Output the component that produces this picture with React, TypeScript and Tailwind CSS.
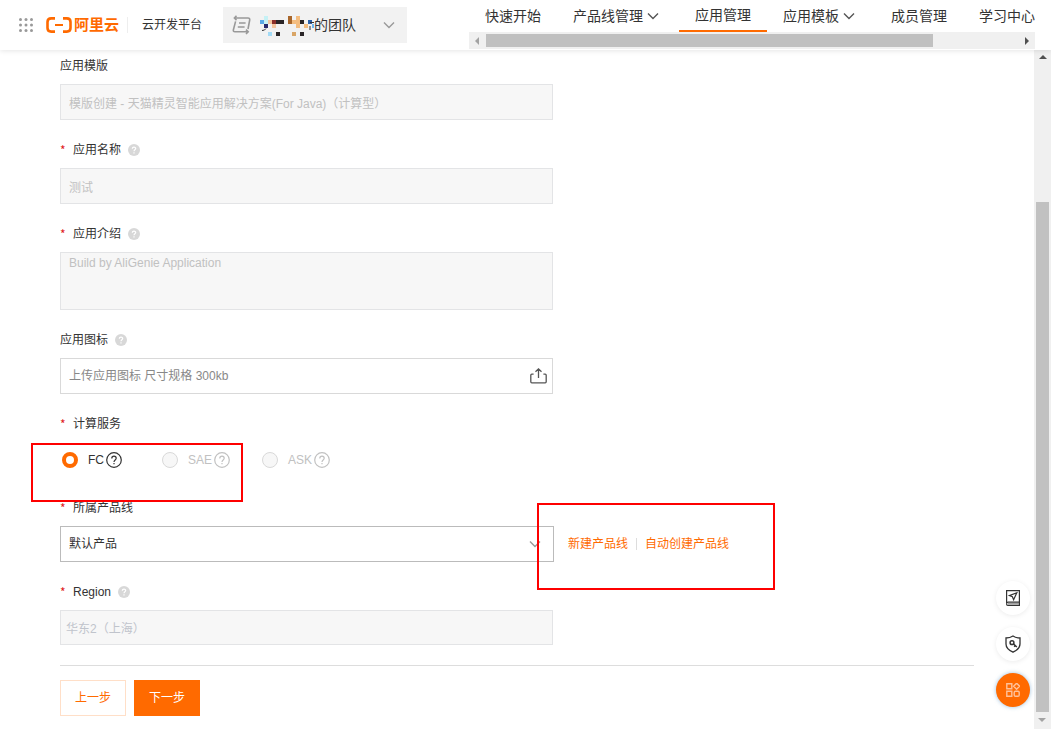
import React from 'react'
import { cva } from 'class-variance-authority'
import clsx from 'clsx'

interface NavItem {
  title: string
  active?: boolean
  hasMenu?: boolean
}

const navItems: NavItem[] = [
  { title: '快速开始' },
  { title: '产品线管理', hasMenu: true },
  { title: '应用管理', active: true },
  { title: '应用模板', hasMenu: true },
  { title: '成员管理' },
  { title: '学习中心' },
]

const services = [
  { name: 'FC', disabled: false },
  { name: 'SAE', disabled: true },
  { name: 'ASK', disabled: true },
]

// x, y, color
const mosaic: [number, number, string][] = [
  [4, 0, '#c5f1f5'],
  [28, 0, '#a9672c'],
  [36, 0, '#f4bd80'],
  [0, 4, '#5aa9e6'],
  [4, 4, '#c5f1f5'],
  [8, 4, '#f4c6a0'],
  [12, 4, '#8c2f2a'],
  [16, 4, '#2a2527'],
  [20, 4, '#2a2527'],
  [28, 4, '#a9672c'],
  [32, 4, '#f4bd80'],
  [36, 4, '#f4bd80'],
  [40, 4, '#2a2527'],
  [48, 4, '#2b62ad'],
  [4, 8, '#27296b'],
  [12, 8, '#f4c6a0'],
  [36, 8, '#f4bd80'],
  [44, 8, '#f4bd80'],
  [52, 8, '#6fb8f2'],
  [8, 16, '#a3dbf6'],
  [16, 16, '#2a2527'],
  [32, 16, '#d9a566'],
  [40, 16, '#2a2527'],
]

const field = cva('block w-[493px] max-w-full rounded-none border px-2 text-xs outline-none', {
  variants: {
    disabled: {
      true: 'border-[#e3e4e6] bg-[#f7f7f7] text-[#c1c1c1]',
      false: 'border-[#d9d9d9] bg-white text-[#333] placeholder:text-[#888]',
    },
  },
})

const Chevron: React.FC<{ className?: string }> = ({ className }) => (
  <svg className={className} width="12" height="12" viewBox="0 0 12 12" fill="none" stroke="currentColor" strokeWidth="1.4">
    <path d="M1 3.5 6 8.5 11 3.5" />
  </svg>
)

const HelpDot = () => (
  <svg className="ml-[7px]" width="12" height="12" viewBox="0 0 12 12" fill="none">
    <circle cx="6" cy="6" r="6" fill="#d8d8d8" />
    <path d="M4.3 4.7c0-2.2 3.4-2.2 3.4-.1C7.7 5.8 6 5.8 6 7.2M6 8.2v1.2" stroke="#fff" strokeWidth="1.2" />
  </svg>
)

const HelpRing = () => (
  <svg className="ml-0.5" width="16" height="16" viewBox="0 0 16 16" fill="none" stroke="currentColor" strokeWidth="1.2">
    <circle cx="8" cy="8" r="7.3" />
    <path d="M5.8 6.4c0-3 4.4-2.9 4.4-.1C10.2 7.9 8 8 8 9.9M8 11v1.3" />
  </svg>
)

interface LabelProps {
  htmlFor?: string
  id?: string
  required?: boolean
  help?: boolean
  children: React.ReactNode
}

const Label: React.FC<LabelProps> = ({ htmlFor, id, required, help, children }) => {
  const Tag = htmlFor ? 'label' : 'div'
  return (
    <Tag htmlFor={htmlFor} id={id} className="mb-[9px] flex h-[18px] items-center text-xs leading-[18px]">
      {required && <span className="w-[13px] font-['Noto_Sans_CJK_SC',sans-serif] text-[#e02020]">*</span>}
      {children}
      {help && <HelpDot />}
    </Tag>
  )
}

const Header = () => (
  <header className="relative z-10 flex h-[50px] shrink-0 bg-white shadow-[0_1px_5px_rgba(0,0,0,0.1)]">
    <div className="flex w-[469px] shrink-0 items-center pl-[19px]">
      <button type="button" aria-label="菜单">
        <svg width="14" height="14" viewBox="0 0 14 14" fill="#999">
          {[1.5, 7, 12.5].map((y) => [1.5, 7, 12.5].map((x) => <circle key={`${x}-${y}`} cx={x} cy={y} r="1.5" />))}
        </svg>
      </button>
      <a href="#" className="ml-[13px] flex items-center text-[#ff6a00]">
        <svg width="26" height="16" viewBox="0 0 26 16" fill="none" stroke="currentColor">
          <path d="M9 1.4H5.2Q1.5 1.4 1.5 5v6q0 3.6 3.7 3.6H9M17 1.4h3.8q3.7 0 3.7 3.6v6q0 3.6-3.7 3.6H17" strokeWidth="2.6" />
          <path d="M9 8h8" strokeWidth="2" />
        </svg>
        <span className="ml-[2px] text-[15px] font-bold leading-5">阿里云</span>
      </a>
      <span className="ml-2 h-4 w-px bg-[#eee]" />
      <span className="ml-[14px] text-xs">云开发平台</span>
      <button type="button" className="ml-[21px] flex h-9 w-[184px] items-center bg-[#f2f2f2] pl-2 pr-3 text-sm">
        <svg width="20" height="20" viewBox="0 0 20 20" fill="none" stroke="#999" strokeWidth="1.6">
          <path d="M5.5.8 3.4 3l2.1 2.2M3.4 3H17q2 0 1.7 2L17 14M4.6 6.4 2.4 14.800q-.5 2 1.600 2h13.300M15 14.600l2.200 2.200L15 19M8 8h6.600M6.800 12h6.800" />
        </svg>
        <svg className="ml-[9px]" width="54" height="22" viewBox="0 0 54 22" aria-hidden="true">
          {mosaic.map(([x, y, color]) => (
            <rect key={`${x}-${y}`} x={x} y={y + 2} width="4" height="4" fill={color} />
          ))}
          <path d="M2 16.500q3 0 4-2M50 8.500h4M50 12v4" stroke="#333" fill="none" />
        </svg>
        <span>的团队</span>
        <Chevron className="ml-auto text-[#999]" />
      </button>
    </div>
    <nav className="mr-4 flex min-w-0 flex-1 flex-col overflow-hidden">
      <ul className="flex h-8">
        {navItems.map((item) => (
          <li key={item.title} className="shrink-0">
            <a
              href="#"
              className={clsx('flex h-8 items-center px-4 text-sm leading-5', item.active && 'border-b-2 border-[#ff6a00]')}
            >
              {item.title}
              {item.hasMenu && <Chevron className="ml-1 mr-1 text-[#555]" />}
            </a>
          </li>
        ))}
      </ul>
      <div className="flex h-[17px] items-center bg-[#f0f0f0]">
        <svg className="shrink-0" width="17" height="17" viewBox="0 0 17 17" fill="#a3a3a3">
          <path d="M10 5v8L6 9z" />
        </svg>
        <div className="h-[13px] w-[79%] bg-[#c0c0c0]" />
        <svg className="ml-auto shrink-0" width="17" height="17" viewBox="0 0 17 17" fill="#505050">
          <path d="M7 5v8l4-4z" />
        </svg>
      </div>
    </nav>
  </header>
)

const PageScrollbar = () => (
  <div className="flex w-[17px] shrink-0 flex-col items-center bg-[#f0f0f0]">
    <svg className="shrink-0" width="17" height="17" viewBox="0 0 17 17" fill="#505050">
      <path d="M5 9h8L9 5z" />
    </svg>
    <div className="flex w-[13px] flex-1 flex-col justify-end">
      <div className="h-[79%] bg-[#c1c1c1]" />
    </div>
    <svg className="shrink-0" width="17" height="17" viewBox="0 0 17 17" fill="#a3a3a3">
      <path d="M4 6h8L8 10z" />
    </svg>
  </div>
)

const FloatingTools = () => (
  <div className="absolute bottom-[22px] right-[21px] flex flex-col gap-3">
    <button
      type="button"
      aria-label="文档"
      className="flex size-[34px] items-center justify-center rounded-full bg-white shadow-[0_1px_5px_rgba(0,0,0,0.08)]"
    >
      <svg width="16" height="18" viewBox="0 0 16 18" fill="none" stroke="#333" strokeWidth="1.2">
        <path d="M1.6 14V1.6h12.8V16.4H2.8q-1.2 0-1.2-1.5T3 13.2h11.4" />
        <path d="M3 14.8h11" stroke="#888" />
        <path d="m11.8 3.8-7.4 2.8 3 1.2 1.2 3z" />
      </svg>
    </button>
    <button
      type="button"
      aria-label="安全"
      className="flex size-[34px] items-center justify-center rounded-full bg-white shadow-[0_1px_5px_rgba(0,0,0,0.08)]"
    >
      <svg width="16" height="18" viewBox="0 0 16 18" fill="none" stroke="#333" strokeWidth="1.3">
        <path d="M8 1Q11 3 15 3v6q0 5-7 8.2Q1 14 1 9V3q4 0 7-2z" />
        <circle cx="7" cy="7.7" r="1.9" strokeWidth="1.5" />
        <path d="m8.4 8.8 3.4 3.2M10.2 10.5l-1 1.2" strokeWidth="1.5" />
      </svg>
    </button>
    <button
      type="button"
      aria-label="工具"
      className="flex size-[34px] items-center justify-center rounded-full bg-[#ff6a00] shadow-[0_0_4px_rgba(90,150,200,0.6)]"
    >
      <svg width="14" height="14" viewBox="0 0 14 14" fill="none" stroke="#ffc199" strokeWidth="1.4">
        <path d="M.8.8h5v5h-5zM.8 8.2h5v5h-5zM10.6.2l3 3-3 3-3-3z" />
        <rect x="8.2" y="8.2" width="5" height="5" rx="1.2" />
      </svg>
    </button>
  </div>
)

const AppForm = () => {
  const [service, setService] = React.useState('FC')
  return (
    <form className="flex flex-col gap-[21px]" onSubmit={(e) => e.preventDefault()}>
      <div>
        <Label htmlFor="template">应用模版</Label>
        <input
          id="template"
          disabled
          className={clsx(field({ disabled: true }), 'h-9')}
          defaultValue="模版创建 - 天猫精灵智能应用解决方案(For Java)（计算型）"
        />
      </div>
      <div>
        <Label htmlFor="name" required help>
          应用名称
        </Label>
        <input id="name" disabled className={clsx(field({ disabled: true }), 'h-9')} defaultValue="测试" />
      </div>
      <div>
        <Label htmlFor="intro" required help>
          应用介绍
        </Label>
        <textarea
          id="intro"
          disabled
          className={clsx(field({ disabled: true }), 'h-[58px] resize-none py-0.5')}
          defaultValue="Build by AliGenie Application"
        />
      </div>
      <div>
        <Label htmlFor="icon" help>
          应用图标
        </Label>
        <div className="relative w-[493px] max-w-full">
          <input
            id="icon"
            readOnly
            className={clsx(field({ disabled: false }), 'h-9 pr-10')}
            placeholder="上传应用图标 尺寸规格 300kb"
          />
          <button type="button" aria-label="上传" className="absolute inset-y-0 right-[6px]">
            <svg width="17" height="18" viewBox="0 0 17 18" fill="none" stroke="#555" strokeWidth="1.3">
              <path d="M3.6 7.2H1.8q-1 0-1 1v6.6q0 1 1 1h13.4q1 0 1-1V8.2q0-1-1-1h-1.8M8.5 11V1.8M5.5 4.8l3-3 3 3" />
            </svg>
          </button>
        </div>
      </div>
      <div>
        <Label id="service" required>
          计算服务
        </Label>
        <div role="radiogroup" aria-labelledby="service" className="relative flex h-9 items-center pl-0.5">
          {services.map(({ name, disabled }) => (
            <label
              key={name}
              className={clsx('flex w-[100px] items-center text-xs', disabled ? 'text-[#c1c1c1]' : 'text-[#333]')}
            >
              <input
                type="radio"
                name="service"
                value={name}
                disabled={disabled}
                checked={service === name}
                onChange={() => setService(name)}
                className="mr-[10px] size-4 appearance-none rounded-full border border-[#d9d9d9] bg-white checked:border-4 checked:border-[#ff6a00] disabled:bg-[#f7f7f7]"
              />
              {name}
              <HelpRing />
            </label>
          ))}
          <div className="pointer-events-none absolute -left-[29px] top-px z-10 h-[59px] w-[212px] border-2 border-[#fe0000]" />
        </div>
      </div>
      <div>
        <Label htmlFor="line" required>
          所属产品线
        </Label>
        <div className="relative flex items-center">
          <div className="relative w-[494px]">
            <select
              id="line"
              className="block h-9 w-full appearance-none rounded-none border border-[#bbb] bg-white px-2 text-xs"
            >
              <option>默认产品</option>
            </select>
            <Chevron className="pointer-events-none absolute right-[13px] top-3 text-[#999]" />
          </div>
          <div className="ml-[14px] flex items-center text-xs text-[#ff6a00]">
            <a href="#">新建产品线</a>
            <span className="mx-2 h-3 w-px bg-[#ddd]" />
            <a href="#">自动创建产品线</a>
          </div>
          <div className="pointer-events-none absolute -top-[23px] left-[477px] h-[87px] w-[238px] border-2 border-[#fe0000]" />
        </div>
      </div>
      <div>
        <Label htmlFor="region" required help>
          Region
        </Label>
        <input
          id="region"
          disabled
          className="block h-[35px] w-[493px] max-w-full border border-[#e3e4e6] bg-[#f7f7f7] px-[5px] text-xs text-[#c0c4cc]"
          defaultValue="华东2（上海）"
        />
      </div>
      <div className="-mt-px flex gap-2 border-t border-[#ddd] pt-[14px]">
        <button type="button" className="h-9 w-[66px] border border-[#ffdfc8] text-xs text-[#ff6a00]">
          上一步
        </button>
        <button type="submit" className="h-9 w-[66px] bg-[#ff6a00] text-xs text-white">
          下一步
        </button>
      </div>
    </form>
  )
}

export default function App() {
  return (
    <div className="flex h-screen flex-col bg-white font-['Liberation_Sans','Noto_Sans_CJK_SC',sans-serif] text-[#333]">
      <Header />
      <div className="flex min-h-0 flex-1">
        <main className="min-w-0 flex-1 overflow-hidden px-[60px] pt-[7px]">
          <AppForm />
        </main>
        <PageScrollbar />
      </div>
      <FloatingTools />
    </div>
  )
}
